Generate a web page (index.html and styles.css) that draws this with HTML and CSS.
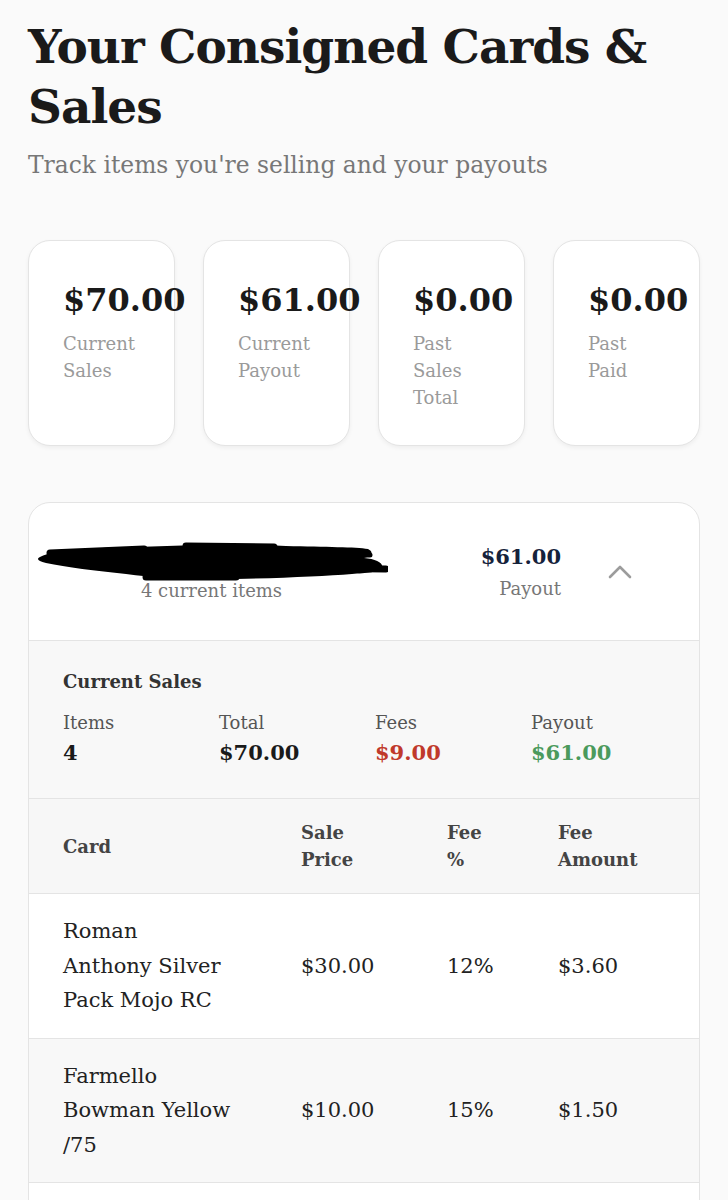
FILE: index.html
```html
<!DOCTYPE html>
<html lang="en">
<head>
<meta charset="utf-8">
<title>Your Consigned Cards &amp; Sales</title>
<link rel="stylesheet" href="styles.css">
</head>
<body>
<main class="page">
  <h1 class="title">Your Consigned Cards &amp; Sales</h1>
  <p class="subtitle">Track items you're selling and your payouts</p>

  <section class="stats">
    <div class="stat">
      <div class="stat-value">$70.00</div>
      <div class="stat-label">Current Sales</div>
    </div>
    <div class="stat">
      <div class="stat-value">$61.00</div>
      <div class="stat-label">Current Payout</div>
    </div>
    <div class="stat">
      <div class="stat-value">$0.00</div>
      <div class="stat-label">Past Sales Total</div>
    </div>
    <div class="stat">
      <div class="stat-value">$0.00</div>
      <div class="stat-label">Past Paid</div>
    </div>
  </section>

  <section class="panel">
    <header class="panel-head">
      <div class="owner">
        <svg class="redact" viewBox="0 0 352 42" aria-hidden="true">
          <path d="M4 16 C 20 8, 60 7, 100 6 C 150 4, 200 3, 250 5 C 290 6, 320 6, 332 8 C 338 11, 336 15, 328 17 C 340 18, 348 22, 346 27 C 344 31, 330 32, 316 33 C 290 35, 250 37, 200 38 C 160 39, 120 37, 90 33 C 60 30, 30 26, 10 22 C 2 20, 0 18, 4 16 Z" fill="#000"/>
          <path d="M14 12 L 108 8 M 150 5 L 238 6 M 260 27 L 350 28 M 110 36 L 200 36" stroke="#000" stroke-width="7" stroke-linecap="round" fill="none"/>
          <path d="M300 14 L 334 14 M 296 22 L 330 22" stroke="#000" stroke-width="5" stroke-linecap="round" fill="none"/>
        </svg>
        <div class="owner-count">4 current items</div>
      </div>
      <div class="head-payout">
        <div class="head-amount">$61.00</div>
        <div class="head-label">Payout</div>
      </div>
      <svg class="chevron" viewBox="0 0 24 14" aria-hidden="true">
        <path d="M2 12 L12 2 L22 12" fill="none" stroke="#9c9c9c" stroke-width="2.6" stroke-linecap="round" stroke-linejoin="round"/>
      </svg>
    </header>

    <div class="summary">
      <div class="summary-title">Current Sales</div>
      <div class="summary-grid">
        <div>
          <div class="sum-label">Items</div>
          <div class="sum-value">4</div>
        </div>
        <div>
          <div class="sum-label">Total</div>
          <div class="sum-value">$70.00</div>
        </div>
        <div>
          <div class="sum-label">Fees</div>
          <div class="sum-value fees">$9.00</div>
        </div>
        <div>
          <div class="sum-label">Payout</div>
          <div class="sum-value payout">$61.00</div>
        </div>
      </div>
    </div>

    <div class="table">
      <div class="table-head">
        <div class="th">Card</div>
        <div class="th">Sale Price</div>
        <div class="th">Fee %</div>
        <div class="th">Fee Amount</div>
      </div>
      <div class="row">
        <div class="card-name">Roman Anthony&nbsp;Silver Pack Mojo RC</div>
        <div>$30.00</div>
        <div>12%</div>
        <div>$3.60</div>
      </div>
      <div class="row alt">
        <div class="card-name">Farmello Bowman Yellow /75</div>
        <div>$10.00</div>
        <div>15%</div>
        <div>$1.50</div>
      </div>
      <div class="row row-more"></div>
    </div>
  </section>
</main>
</body>
</html>
```

FILE: styles.css
```css
* {
  box-sizing: border-box;
}

body {
  margin: 0;
  background: #fafafa;
  font-family: "DejaVu Serif", "Liberation Serif", serif;
  color: #1a1a1a;
}

.page {
  padding: 17px 28px 0;
}

.title {
  margin: 0;
  font-size: 47px;
  line-height: 60px;
  font-weight: 700;
  letter-spacing: -1px;
  color: #1a1a1a;
}

.subtitle {
  margin: 12px 0 0;
  font-size: 23.4px;
  line-height: 32px;
  color: #777;
}

.stats {
  display: grid;
  grid-template-columns: repeat(4, minmax(0, 1fr));
  gap: 28px;
  margin-top: 59px;
}

.stat {
  min-width: 0;
  background: #fff;
  border: 1px solid #e4e4e4;
  border-radius: 22px;
  padding: 39px 34px 34px;
  box-shadow: 0 2px 4px rgba(0, 0, 0, 0.05);
}

.stat-value {
  font-size: 32px;
  line-height: 40px;
  font-weight: 700;
  white-space: nowrap;
  color: #1a1a1a;
}

.stat-label {
  margin-top: 10px;
  font-size: 18px;
  line-height: 27px;
  color: #9a9a9a;
}

.panel {
  margin-top: 56px;
  background: #fff;
  border: 1px solid #e4e4e4;
  border-radius: 22px;
  overflow: hidden;
}

.panel-head {
  display: flex;
  align-items: center;
  height: 137px;
  padding: 0 67px 0 34px;
}

.owner {
  width: 297px;
  display: flex;
  flex-direction: column;
  align-items: center;
}

.redact {
  flex: none;
  width: 352px;
  height: 42px;
  margin-bottom: -4px;
}

.owner-count {
  font-size: 18px;
  line-height: 24px;
  color: #777;
}

.head-payout {
  margin-left: auto;
  text-align: right;
}

.head-amount {
  font-size: 21px;
  line-height: 28px;
  font-weight: 700;
  color: #15223b;
}

.head-label {
  margin-top: 6px;
  font-size: 18px;
  line-height: 24px;
  color: #777;
}

.chevron {
  flex: none;
  width: 24px;
  height: 14px;
  margin-left: 47px;
}

.summary {
  background: #f8f8f8;
  border-top: 1px solid #e4e4e4;
  padding: 29px 34px 30px;
}

.summary-title {
  font-size: 18px;
  line-height: 24px;
  font-weight: 700;
  color: #333;
}

.summary-grid {
  display: grid;
  grid-template-columns: repeat(4, 156px);
  margin-top: 17px;
}

.sum-label {
  font-size: 18px;
  line-height: 24px;
  color: #555;
}

.sum-value {
  margin-top: 3px;
  font-size: 21px;
  line-height: 30px;
  font-weight: 700;
  color: #1a1a1a;
}

.sum-value.fees {
  color: #c0392b;
}

.sum-value.payout {
  color: #4b9a5c;
}

.table-head,
.row {
  display: grid;
  grid-template-columns: 238px 146px 111px 1fr;
  align-items: center;
  padding: 20px 34px;
  border-top: 1px solid #e4e4e4;
}

.table-head {
  background: #f7f7f7;
}

.th {
  width: min-content;
  font-size: 18px;
  line-height: 27px;
  font-weight: 700;
  color: #444;
}

.row {
  background: #fff;
  font-size: 21px;
  line-height: 34.5px;
  color: #222;
}

.row.alt {
  background: #f8f8f8;
}

.row-more {
  min-height: 80px;
}

.card-name {
  max-width: 172px;
}
```
